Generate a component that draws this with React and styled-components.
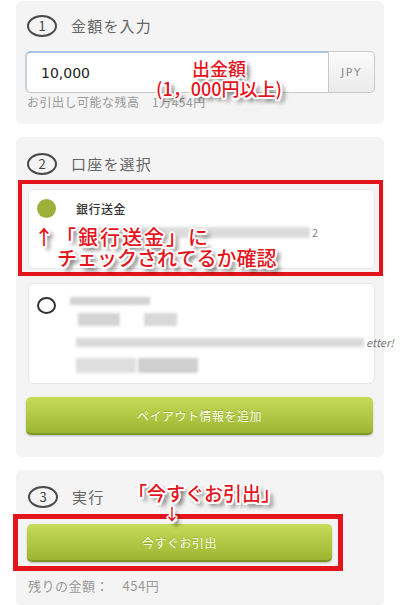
import React from 'react';
import styled, { createGlobalStyle } from 'styled-components';

const GlobalStyle = createGlobalStyle`
  body {
    margin: 0;
    background: #fff;
    font-family: "Noto Sans CJK JP", "Noto Sans", sans-serif;
  }
`;

const Page = styled.div`
  position: relative;
  width: 400px;
  height: 605px;
  overflow: hidden;
  box-sizing: border-box;
  padding: 1px 16px 0;
  display: flex;
  flex-direction: column;
  gap: 13px;
`;

const Card = styled.section`
  background: #f4f4f4;
  border-radius: 6px;
  padding: ${p => p.$pad || '14px 9px 15px 10px'};
  display: flex;
  flex-direction: column;
`;

const StepHeader = styled.div`
  display: flex;
  align-items: center;
  gap: 14px;
  height: 21px;
  margin: 0 0 ${p => p.$gap || 15}px 1px;
`;

const StepNum = styled.span`
  width: 26px;
  height: 18px;
  border: 2px solid #4a4a4a;
  border-radius: 50%;
  display: flex;
  align-items: center;
  justify-content: center;
  font-size: 13px;
  color: #444;
`;

const StepTitle = styled.h2`
  margin: 0;
  font-size: 15px;
  font-weight: 400;
  color: #666;
  letter-spacing: 1.2px;
`;

const InputGroup = styled.div`
  display: flex;
  height: 42px;
`;

const AmountInput = styled.div`
  flex: 1;
  display: flex;
  align-items: center;
  padding: 0 14px;
  background: #fff;
  border: 1px solid #c9c9c9;
  border-top: 2px solid #a9c2df;
  border-radius: 5px 0 0 5px;
  box-shadow: -1px 0 0 #c4d4e8;
  font-family: "DejaVu Sans", sans-serif;
  font-size: 14px;
  color: #222;
`;

const Addon = styled.div`
  width: 45px;
  display: flex;
  align-items: center;
  justify-content: center;
  border: 1px solid #c9c9c9;
  border-left: none;
  border-radius: 0 5px 5px 0;
  background: linear-gradient(#fbfbfb, #ebebeb);
  font-family: "DejaVu Sans", sans-serif;
  font-size: 11px;
  letter-spacing: 1.5px;
  color: #8a8a8a;
`;

const Hint = styled.p`
  margin: ${p => p.$top || 2}px 0 0 1px;
  font-size: ${p => p.$size || 12}px;
  color: #999;
  letter-spacing: 0.5px;
  line-height: 14px;
`;

const Options = styled.div`
  display: flex;
  flex-direction: column;
  gap: 14px;
  margin-left: 2px;
`;

const Option = styled.div`
  position: relative;
  box-sizing: border-box;
  height: ${p => p.$h}px;
  background: #fff;
  border: 1px solid #e7e7e7;
  border-radius: 6px;
  display: flex;
  align-items: flex-start;
  gap: 20px;
  padding: ${p => p.$padTop}px 8px 0 8px;
`;

const Radio = styled.span`
  flex: none;
  box-sizing: border-box;
  width: 19px;
  height: ${p => (p.$checked ? 19 : 17)}px;
  border-radius: 50%;
  background: ${p => (p.$checked ? '#9bb13c' : 'transparent')};
  border: ${p => (p.$checked ? 'none' : '2px solid #333')};
`;

const OptionBody = styled.div`
  display: flex;
  flex-direction: column;
  gap: ${p => p.$gap || 4}px;
`;

const OptionTitle = styled.span`
  font-size: 12px;
  font-weight: 500;
  color: #333;
  line-height: 18px;
  margin-top: 1px;
  letter-spacing: 0.5px;
`;

const BlurRow = styled.div`
  display: flex;
  align-items: center;
  gap: 2px;
  margin-left: ${p => p.$indent || 0}px;
  font-size: 11px;
  color: #888;
  white-space: nowrap;
`;

const Blur = styled.span`
  display: inline-block;
  width: ${p => p.$w}px;
  height: ${p => p.$h || 10}px;
  background: ${p => p.$c || '#d6d6d6'};
  filter: blur(1.5px);
`;

const Tail = styled.span`
  font-style: italic;
  font-size: 11px;
  color: #777;
`;

const GreenButton = styled.button`
  width: ${p => p.$w || '100%'};
  height: 38px;
  border: none;
  border-bottom: 2px solid #7e9624;
  border-radius: 5px;
  background: linear-gradient(#c8dc59, #9cb631);
  box-shadow: 0 1px 2px rgba(0, 0, 0, 0.25);
  color: #fbfde9;
  font-family: inherit;
  font-size: 12px;
  letter-spacing: 0.5px;
  text-shadow: 0 -1px 0 rgba(90, 110, 20, 0.35);
`;

const Marked = styled.div`
  position: relative;
  align-self: flex-start;
  width: ${p => p.$w || 'auto'};
  &::after {
    content: '';
    position: absolute;
    top: -${p => p.$t}px;
    right: -${p => p.$r}px;
    bottom: -${p => p.$b}px;
    left: -${p => p.$l}px;
    border: ${p => p.$bw || 4}px solid #e3141c;
    pointer-events: none;
  }
`;

const Note = styled.div`
  position: absolute;
  top: ${p => p.$top}px;
  left: ${p => p.$left}px;
  width: ${p => (p.$w ? `${p.$w}px` : 'auto')};
  text-align: ${p => p.$align || 'left'};
  font-size: ${p => p.$size || 19}px;
  line-height: ${p => p.$lh || 20}px;
  font-weight: 500;
  color: #e5141d;
  white-space: nowrap;
  text-shadow:
    -1.5px -1.5px 0 #fff, 1.5px -1.5px 0 #fff, -1.5px 1.5px 0 #fff, 1.5px 1.5px 0 #fff,
    0 -2px 0 #fff, 0 2px 0 #fff, -2px 0 0 #fff, 2px 0 0 #fff,
    4px 4px 4px rgba(0, 0, 0, 0.75);
`;

const NoteLine = styled.span`
  display: block;
  padding-left: ${p => p.$indent || 0}px;
  letter-spacing: ${p => p.$ls || 0}px;
`;

const App = () => {
  return (
    <>
      <GlobalStyle />
      <Page>
        <Card>
          <StepHeader>
            <StepNum>1</StepNum>
            <StepTitle>金額を入力</StepTitle>
          </StepHeader>
          <InputGroup>
            <AmountInput>10,000</AmountInput>
            <Addon>JPY</Addon>
          </InputGroup>
          <Hint>お引出し可能な残高　1万454円</Hint>
        </Card>

        <Card $pad="16px 9px 22px 10px">
          <StepHeader>
            <StepNum>2</StepNum>
            <StepTitle>口座を選択</StepTitle>
          </StepHeader>
          <Options>
            <Marked $w="100%" $t={9} $r={8} $b={7} $l={10}>
              <Option $h={80} $padTop={9}>
                <Radio $checked />
                <OptionBody $gap={6}>
                  <OptionTitle>銀行送金</OptionTitle>
                  <BlurRow>
                    <Blur $w={234} $h={11} $c="#dcdcdc" />
                    2
                  </BlurRow>
                </OptionBody>
              </Option>
            </Marked>
            <Option $h={101} $padTop={13}>
              <Radio />
              <OptionBody $gap={8}>
                <BlurRow $indent={-6}>
                  <Blur $w={80} $h={8} $c="#d2d2d2" />
                </BlurRow>
                <BlurRow $indent={2}>
                  <Blur $w={42} $h={13} $c="#d4d4d4" />
                  <Blur $w={20} $h={13} $c="#fff" />
                  <Blur $w={33} $h={13} $c="#d8d8d8" />
                </BlurRow>
                <BlurRow $indent={0}>
                  <Blur $w={288} $h={9} $c="#dadada" />
                  <Tail>etter!</Tail>
                </BlurRow>
                <BlurRow $indent={0}>
                  <Blur $w={60} $h={15} $c="#dedede" />
                  <Blur $w={60} $h={15} $c="#cfcfcf" />
                </BlurRow>
              </OptionBody>
            </Option>
          </Options>
          <GreenButton style={{ marginTop: 13 }} $w="347px">ペイアウト情報を追加</GreenButton>
        </Card>

        <Card $pad="16px 9px 13px 11px">
          <StepHeader $gap={17}>
            <StepNum>3</StepNum>
            <StepTitle>実行</StepTitle>
          </StepHeader>
          <Marked $t={10} $r={11} $b={9} $l={14} $bw={5}>
            <GreenButton $w="305px">今すぐお引出</GreenButton>
          </Marked>
          <Hint $top={17} $size={13}>残りの金額：　454円</Hint>
        </Card>

        <Note $top={58} $left={148} $w={142} $align="center" $size={18} $lh={20}>
          出金額
          <br />
          (1，000円以上)
        </Note>
        <Note $top={226} $left={34} $size={20} $lh={21}>
          <NoteLine $ls={2}>↑「銀行送金」に</NoteLine>
          <NoteLine $indent={23}>チェックされてるか確認</NoteLine>
        </Note>
        <Note $top={483} $left={128} $size={19} $lh={20}>
          「今すぐお引出」
        </Note>
        <Note $top={503} $left={164} $size={16} $lh={20}>
          ↓
        </Note>
      </Page>
    </>
  );
};

export default App;
